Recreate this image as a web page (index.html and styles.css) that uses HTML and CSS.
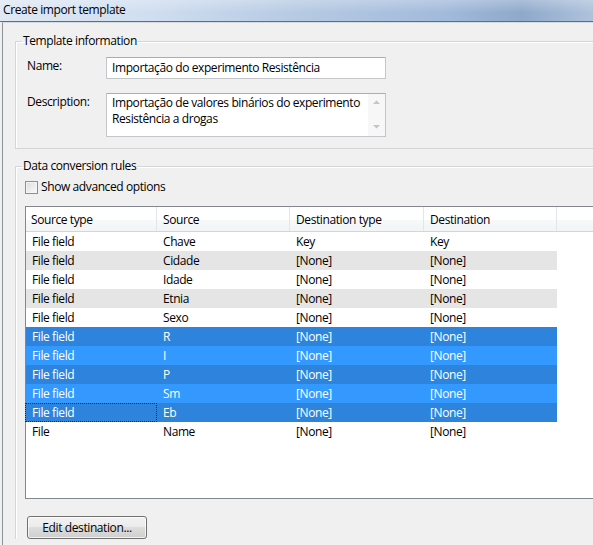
FILE: index.html
```html
<!DOCTYPE html>
<html>
<head>
<meta charset="utf-8">
<link rel="stylesheet" href="styles.css">
</head>
<body>
<div class="titlebar">Create import template</div>
<div class="window">
  <fieldset class="group group-info">
    <legend>Template information</legend>
    <div class="form">
      <div class="label">Name:</div>
      <div class="input">Importação do experimento Resistência</div>
      <div class="label">Description:</div>
      <div class="textarea">
        <div class="ta-text">Importação de valores binários do experimento<br>Resistência a drogas</div>
        <div class="ta-scroll">
          <svg width="9" height="6" viewBox="0 0 9 6"><path d="M1 5 L4.5 1.5 L8 5 Z" fill="#c4c4c4"/></svg>
          <svg width="9" height="6" viewBox="0 0 9 6"><path d="M1 1 L4.5 4.5 L8 1 Z" fill="#c4c4c4"/></svg>
        </div>
      </div>
    </div>
  </fieldset>
  <fieldset class="group group-rules">
    <legend>Data conversion rules</legend>
    <label class="check"><span class="box"></span>Show advanced options</label>
    <div class="table">
      <div class="row head">
        <div class="c c1">Source type</div><div class="c c2">Source</div><div class="c c3">Destination type</div><div class="c c4">Destination</div><div class="c c5"></div>
      </div>
      <div class="row"><div class="c c1">File field</div><div class="c c2">Chave</div><div class="c c3">Key</div><div class="c c4">Key</div></div>
      <div class="row alt"><div class="c c1">File field</div><div class="c c2">Cidade</div><div class="c c3">[None]</div><div class="c c4">[None]</div></div>
      <div class="row"><div class="c c1">File field</div><div class="c c2">Idade</div><div class="c c3">[None]</div><div class="c c4">[None]</div></div>
      <div class="row alt"><div class="c c1">File field</div><div class="c c2">Etnia</div><div class="c c3">[None]</div><div class="c c4">[None]</div></div>
      <div class="row"><div class="c c1">File field</div><div class="c c2">Sexo</div><div class="c c3">[None]</div><div class="c c4">[None]</div></div>
      <div class="row sel-dark"><div class="c c1">File field</div><div class="c c2">R</div><div class="c c3">[None]</div><div class="c c4">[None]</div></div>
      <div class="row sel-light"><div class="c c1">File field</div><div class="c c2">I</div><div class="c c3">[None]</div><div class="c c4">[None]</div></div>
      <div class="row sel-dark"><div class="c c1">File field</div><div class="c c2">P</div><div class="c c3">[None]</div><div class="c c4">[None]</div></div>
      <div class="row sel-light"><div class="c c1">File field</div><div class="c c2">Sm</div><div class="c c3">[None]</div><div class="c c4">[None]</div></div>
      <div class="row sel-dark"><div class="c c1 focus">File field</div><div class="c c2">Eb</div><div class="c c3">[None]</div><div class="c c4">[None]</div></div>
      <div class="row"><div class="c c1">File</div><div class="c c2">Name</div><div class="c c3">[None]</div><div class="c c4">[None]</div></div>
    </div>
    <button class="btn">Edit destination...</button>
  </fieldset>
</div>
</body>
</html>
```
FILE: styles.css
```css
html, body {
  margin: 0;
  padding: 0;
}
body {
  width: 593px;
  height: 545px;
  overflow: hidden;
  background: #f0f0f0;
  font-family: "Segoe UI", "Open Sans", sans-serif;
  font-size: 12px;
  letter-spacing: -0.4px;
  color: #000;
}
.titlebar {
  height: 21px;
  line-height: 20px;
  padding-left: 3px;
  border-bottom: 1px solid #5f6f82;
  background:
    linear-gradient(to bottom, rgba(255,255,255,0.25), rgba(255,255,255,0) 60%),
    linear-gradient(to right, #dfe8f3 0%, #d0def0 25%, #b6cae3 50%, #a2badb 75%, #8fa9cb 88%, #aec2db 100%);
}
.window {
  width: 591px;
  height: 523px;
  overflow: hidden;
  margin-left: 2px;
  border-left: 1px solid #8d9298;
  border-top: 1px solid #d6dbe0;
  padding-left: 12px;
  padding-top: 10px;
  box-sizing: border-box;
}
.group {
  margin: 0;
  border: 1px solid #d5d5d5;
  border-right: none;
  box-shadow: inset 1px 1px 0 #fff;
  min-width: 0;
}
.group legend {
  line-height: 16px;
  padding: 0 1px;
}
.group-info {
  padding: 8px 0 11px 11px;
}
.group-info legend {
  margin-left: -5px;
}
.group-rules {
  margin-top: 9px;
  padding: 6px 0 0 9px;
  border-bottom: none;
  height: 381px;
  box-sizing: border-box;
}
.group-rules legend {
  margin-left: -3px;
}
.form {
  display: grid;
  grid-template-columns: 79px 280px;
  row-gap: 14px;
  align-items: start;
}
.label {
  line-height: 16px;
  padding-top: 1px;
}
.input {
  height: 22px;
  box-sizing: border-box;
  border: 1px solid #c3c7cc;
  border-top-color: #abadb3;
  background: #fff;
  padding-left: 5px;
  line-height: 19px;
}
.textarea {
  height: 44px;
  box-sizing: border-box;
  border: 1px solid #c3c7cc;
  border-top-color: #abadb3;
  background: #fff;
  display: flex;
}
.ta-text {
  flex: 1;
  padding: 1px 0 0 5px;
  line-height: 16px;
  white-space: nowrap;
}
.ta-scroll {
  width: 17px;
  display: flex;
  flex-direction: column;
  justify-content: space-between;
  align-items: center;
  padding: 5px 0 6px;
  box-sizing: border-box;
  background: #f7f7f7;
}
.ta-scroll svg {
  display: block;
}
.check {
  display: flex;
  align-items: center;
  height: 14px;
  line-height: 14px;
}
.box {
  width: 11px;
  height: 11px;
  border: 1px solid #8f8f8f;
  background: linear-gradient(135deg, #dcdcdc, #fbfbfb);
  box-shadow: inset 0 0 0 1px #f4f4f4;
  margin-right: 3px;
  flex: none;
}
.table {
  margin-top: 12px;
  height: 293px;
  box-sizing: border-box;
  border: 1px solid #828790;
  border-right: none;
  background: #fff;
}
.row {
  display: flex;
  height: 19px;
  line-height: 19px;
}
.row .c {
  flex: none;
  padding-left: 6px;
  box-sizing: border-box;
  white-space: nowrap;
}
.c1 { width: 131px; }
.c2 { width: 133px; }
.c3 { width: 134px; }
.c4 { width: 133px; }
.row .c5 { flex: 1; }
.row.head {
  height: 25px;
  box-sizing: border-box;
  line-height: 25px;
  border-bottom: 1px solid #d5d5d5;
  background: linear-gradient(to bottom, #ffffff 0%, #ffffff 55%, #f7f8fa 56%, #f3f4f6 100%);
}
.row.head .c {
  border-right: 1px solid #e3e5e8;
}
.row.head .c1 {
  padding-left: 5px;
}
.row.head .c5 {
  border-right: none;
}
.row:not(.head) {
  width: 531px;
}
.row.alt {
  background: #e5e5e5;
}
.row.sel-dark {
  background: #2e84dc;
  color: #fff;
}
.row.sel-light {
  background: #3399ff;
  color: #fff;
}
.row .focus {
  outline: 1px dotted #222;
  outline-offset: -1px;
  margin-left: -1px;
  width: 132px;
  padding-left: 7px;
}
.btn {
  margin-top: 17px;
  margin-left: 2px;
  width: 120px;
  height: 23px;
  font: inherit;
  letter-spacing: inherit;
  color: #000;
  border: 1px solid #707070;
  border-radius: 3px;
  background: linear-gradient(to bottom, #f2f2f2 0%, #ebebeb 49%, #dddddd 50%, #cfcfcf 100%);
  box-shadow: inset 0 0 0 1px rgba(255,255,255,0.7);
  padding: 0;
  display: block;
}
```
